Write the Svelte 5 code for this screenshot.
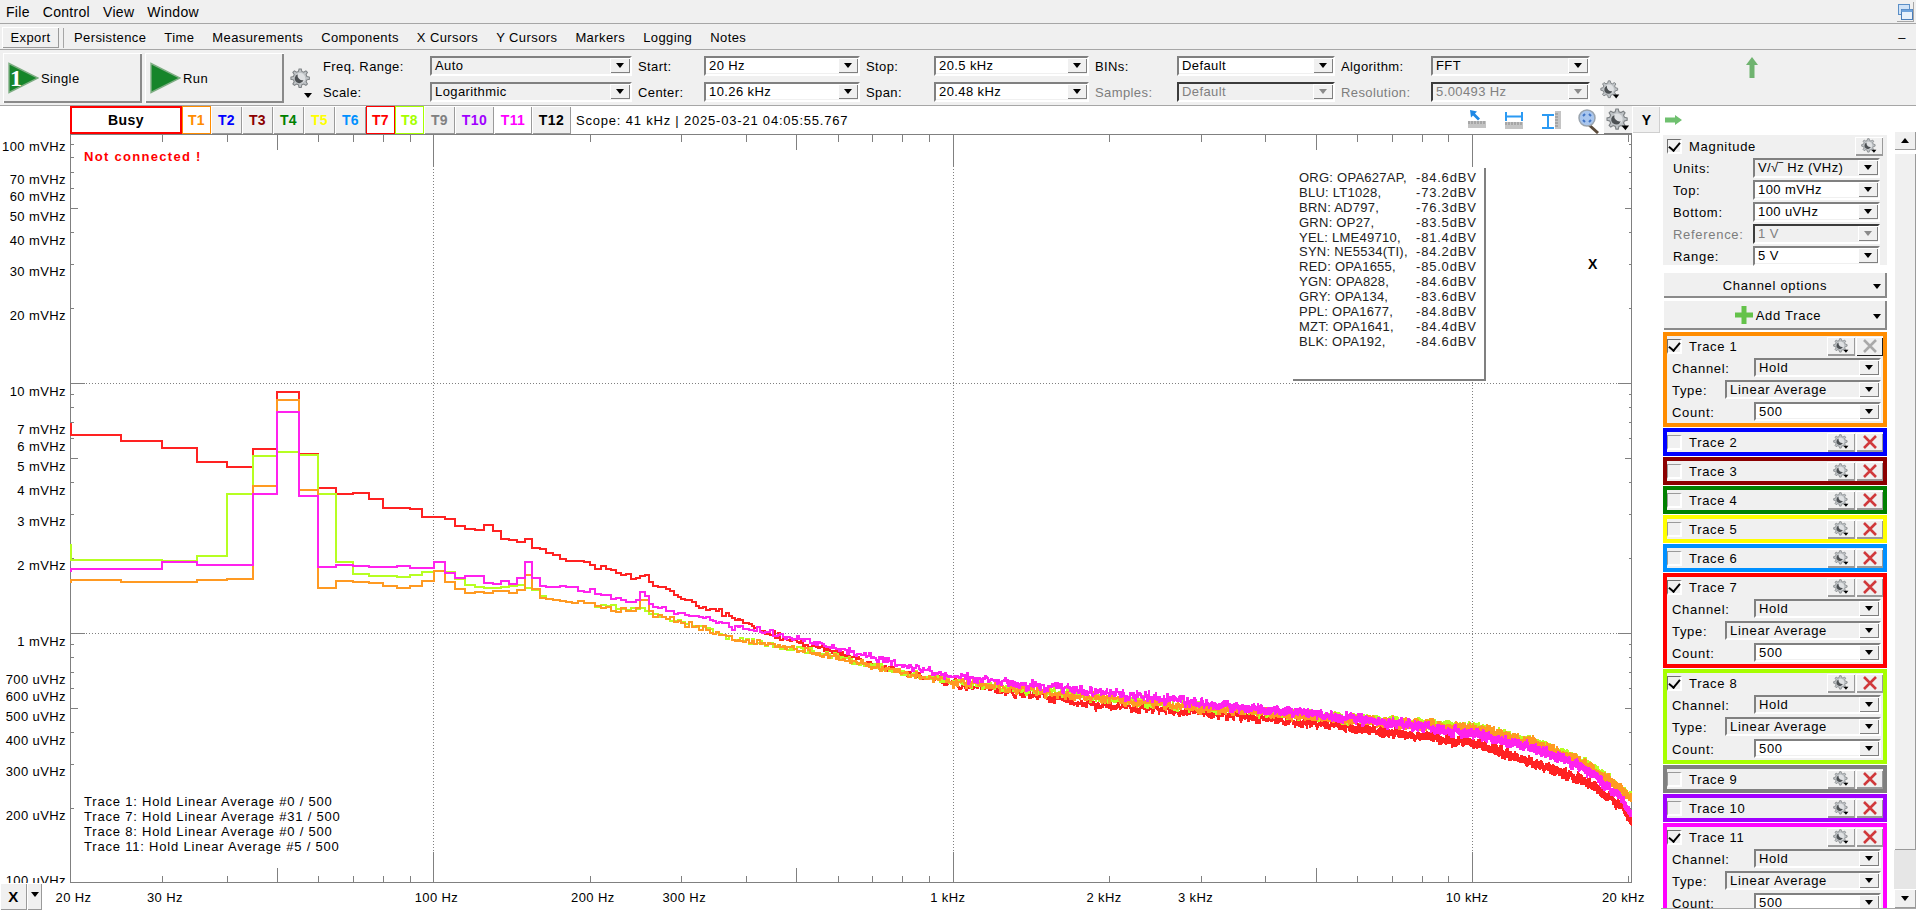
<script>
  const menus = ['File', 'Control', 'View', 'Window'];
  const tools = ['Persistence', 'Time', 'Measurements', 'Components', 'X Cursors', 'Y Cursors', 'Markers', 'Logging', 'Notes'];

  const tabs = [
    { label: 'T1', color: '#ff8c00', w: 29, on: true },
    { label: 'T2', color: '#0000ff', w: 31 },
    { label: 'T3', color: '#8b0000', w: 31 },
    { label: 'T4', color: '#008000', w: 31 },
    { label: 'T5', color: '#ffff00', w: 31 },
    { label: 'T6', color: '#0090ff', w: 31 },
    { label: 'T7', color: '#ff0000', w: 29, on: true },
    { label: 'T8', color: '#a6ff00', w: 29, on: true },
    { label: 'T9', color: '#808080', w: 31 },
    { label: 'T10', color: '#a000ff', w: 39 },
    { label: 'T11', color: '#ff00ff', w: 38, flat: true },
    { label: 'T12', color: '#000000', w: 39 }
  ];

  const traces = [
    { n: 1, color: '#ff8c00', open: true, off: true },
    { n: 2, color: '#0000ff' },
    { n: 3, color: '#8b0000' },
    { n: 4, color: '#008000' },
    { n: 5, color: '#ffff00' },
    { n: 6, color: '#0090ff' },
    { n: 7, color: '#ff0000', open: true },
    { n: 8, color: '#a6ff00', open: true },
    { n: 9, color: '#808080' },
    { n: 10, color: '#a000ff' },
    { n: 11, color: '#ff00ff', open: true }
  ];

  const legend = [
    ['ORG: OPA627AP,', '-84.6dBV'],
    ['BLU: LT1028,', '-73.2dBV'],
    ['BRN: AD797,', '-76.3dBV'],
    ['GRN: OP27,', '-83.5dBV'],
    ['YEL: LME49710,', '-81.4dBV'],
    ['SYN: NE5534(TI),', '-84.2dBV'],
    ['RED: OPA1655,', '-85.0dBV'],
    ['YGN: OPA828,', '-84.6dBV'],
    ['GRY: OPA134,', '-83.6dBV'],
    ['PPL: OPA1677,', '-84.8dBV'],
    ['MZT: OPA1641,', '-84.4dBV'],
    ['BLK: OPA192,', '-84.6dBV']
  ];

  const status = [
    'Trace 1: Hold Linear Average #0 / 500',
    'Trace 7: Hold Linear Average #31 / 500',
    'Trace 8: Hold Linear Average #0 / 500',
    'Trace 11: Hold Linear Average #5 / 500'
  ];

  // plot scales, y is relative to the top of the plot (screen y 134)
  const PLOT_TOP = 134;
  const AX_L = 70.5;
  const AX_R = 1631.5;
  const AX_B = 748.5;
  const fx = (f) => 70.5 + 519.3 * Math.log10(f / 20);
  const vy = (mv) => 133 - PLOT_TOP + 250 * Math.log10(100 / mv);
  const fmtV = (mv) => (mv >= 1 ? `${mv} mVHz` : `${Math.round(mv * 1000)} uVHz`);
  // the first and last label are pushed inside the plot
  const labelY = (mv) => (mv === 100 ? 17 : mv === 0.1 ? 751 : vy(mv) + 12.5);

  const levels = [];
  for (const d of [10, 1, 0.1]) {
    for (const m of [9, 8, 7, 6, 5, 4, 3, 2, 1]) levels.push({ mv: +(m * d).toPrecision(2), m });
  }
  const freqs = [];
  for (const d of [10, 100, 1000, 10000]) {
    for (let m = 1; m <= 9; m++) {
      const f = m * d;
      if (f > 20 && f <= 20000) freqs.push({ f, m });
    }
  }

  const yLabels = [100, 70, 60, 50, 40, 30, 20, 10, 7, 6, 5, 4, 3, 2, 1, 0.7, 0.6, 0.5, 0.4, 0.3, 0.2, 0.1];
  const xLabels = [
    ['20 Hz', 20], ['30 Hz', 30], ['100 Hz', 100], ['200 Hz', 200], ['300 Hz', 300],
    ['1 kHz', 1000], ['2 kHz', 2000], ['3 kHz', 3000], ['10 kHz', 10000], ['20 kHz', 20000]
  ];

  // measured bins 20..175 Hz, 5 Hz wide
  const lowRed = [195, 212, 233, 275, 290, 237, 65, 251, 353, 371, 369, 386, 413, 413, 416, 440, 440, 446, 468, 476, 480, 464, 482, 507, 510, 515, 507, 534, 537, 548, 556, 566];
  const lowOrange = [630, 635, 635, 630, 627, 348, 90, 360, 654, 632, 635, 638, 647, 654, 648, 632, 602, 635, 657, 668, 665, 668, 662, 662, 668, 660, 615, 657, 683, 688, 690, 692];
  const lowLime = [570, 570, 572, 557, 372, 258, 245, 255, 372, 575, 612, 618, 618, 620, 614, 606, 602, 607, 627, 645, 651, 655, 655, 652, 648, 645, 653, 660, 678, 686, 690, 693];
  const lowMag = [596, 596, 576, 585, 585, 372, 126, 378, 591, 585, 588, 591, 591, 588, 593, 593, 575, 608, 624, 618, 618, 638, 642, 632, 642, 623, 575, 623, 648, 651, 650, 648];

  const redCurve = [[180, 559], [250, 578], [326, 606], [379, 618], [443, 633], [596, 653], [789, 672], [1000, 683], [1917, 705], [3000, 713], [4800, 722], [10000, 743], [13000, 762], [16400, 780], [19300, 805], [20500, 826]];
  const magCurve = [[180, 586], [250, 605], [326, 617], [379, 627], [443, 633], [596, 648], [789, 665], [1000, 677], [1917, 692], [3000, 703], [4800, 713], [10000, 733], [13000, 747], [16400, 768], [19300, 797], [20500, 820]];
  const orangeCurve = [[180, 601], [250, 612], [326, 628], [379, 640], [443, 645], [596, 657], [789, 673], [1000, 682], [1917, 698], [3000, 708], [4800, 716], [10000, 728], [13000, 742], [16400, 763], [19300, 788], [20500, 800]];
  const limeCurve = orangeCurve.map(([f, y]) => [f, y - 0.5]);

  function rng(seed) {
    let a = seed;
    return () => {
      a = (a + 0x6d2b79f5) | 0;
      let t = Math.imul(a ^ (a >>> 15), 1 | a);
      t = (t + Math.imul(t ^ (t >>> 7), 61 | t)) ^ t;
      return ((t ^ (t >>> 14)) >>> 0) / 4294967296;
    };
  }

  function interp(curve, f) {
    for (let i = 1; i < curve.length; i++) {
      if (f <= curve[i][0]) {
        const [f0, y0] = curve[i - 1];
        const [f1, y1] = curve[i];
        const t = (Math.log(f) - Math.log(f0)) / (Math.log(f1) - Math.log(f0));
        return y0 + (y1 - y0) * t;
      }
    }
    return curve[curve.length - 1][1];
  }

  function tracePath(low, startZoom, curve, spike, seed) {
    const rand = rng(seed);
    let d = `M${AX_L} ${(370 + startZoom / 3 - PLOT_TOP).toFixed(1)}`;
    let col = -1;
    let jitter = 0;
    for (let i = 0; ; i++) {
      const f = 20 + i * 5;
      if (f > 20500) break;
      const x0 = fx(f);
      // per column offset, so the band keeps a rough edge where bins are dense
      const c = Math.floor(x0 / 2);
      if (c !== col) {
        col = c;
        jitter = (rand() - 0.5) * (f < 1000 ? 2 : 5);
      }
      let y;
      if (i < low.length) {
        y = 370 + low[i] / 3;
      } else {
        const amp = f < 400 ? 3 : f < 1000 ? 4 : 4.5;
        const r = (rand() + rand()) / 2 - 0.5;
        y = interp(curve, f) + r * amp * 2 + jitter;
        if (f === 250 || f === 255) y += spike;
        if (f === 245 || f === 260) y += spike / 3;
      }
      const x1 = Math.min(fx(f + 5), AX_R);
      d += `V${(y - PLOT_TOP).toFixed(1)}H${x1.toFixed(1)}`;
      if (x0 >= AX_R) break;
    }
    return d;
  }

  const curves = [
    { color: '#ff2222', d: tracePath(lowRed, 158, redCurve, -4, 7) },
    { color: '#b6ff22', d: tracePath(lowLime, 522, limeCurve, -4, 8) },
    { color: '#ff9a22', d: tracePath(lowOrange, 640, orangeCurve, -12, 1) },
    { color: '#ff22ee', d: tracePath(lowMag, 605, magCurve, -12, 11) }
  ];

  function gearPath() {
    const pts = [];
    const teeth = 8;
    for (let i = 0; i < teeth; i++) {
      const a = (i / teeth) * Math.PI * 2;
      const w = Math.PI / teeth;
      for (const [r, o] of [[8.2, -0.62], [11, -0.3], [11, 0.3], [8.2, 0.62]]) {
        pts.push(`${(12 + r * Math.cos(a + o * w)).toFixed(2)} ${(12 + r * Math.sin(a + o * w)).toFixed(2)}`);
      }
    }
    return 'M' + pts.join('L') + 'Z';
  }
  const gear = gearPath();
</script>

{#snippet cog(size, caret)}
  <svg class="cog" width={size} height={size} viewBox="0 0 26 26">
    <path d={gear} fill="#bfc3c6" stroke="#7d8184" stroke-width="1.2" />
    <circle cx="12" cy="12" r="6" fill="#dfe1e3" />
    <path d="M9 7.5a5.4 5.4 0 1 0 7 7a6 6 0 0 1-7-7z" fill="#4c5053" />
    {#if caret}<path d="M17 19h8l-4 5z" fill="#000" />{/if}
  </svg>
{/snippet}

{#snippet sel(text, kind = '')}
  <div class="sel {kind}">
    <span class="val">{text}</span>
    <span class="drop"><i></i></span>
  </div>
{/snippet}

{#snippet play(one)}
  <svg class="play" width="32" height="32" viewBox="0 0 32 32">
    <path d="M2 1.5L31 16L2 30.5z" fill="#16852a" stroke="#7fae84" stroke-width="1.4" />
    {#if one}<text x="3" y="24" class="one">1</text>{/if}
  </svg>
{/snippet}

<div class="app">
  <div class="menubar">
    {#each menus as m}<span>{m}</span>{/each}
    <span class="win-btn">
      <svg width="17" height="18" viewBox="0 0 17 18">
        <rect x="1.5" y="1.5" width="11" height="10" fill="#cfe2f7" stroke="#5b8fc7" />
        <rect x="4.5" y="6.5" width="11" height="10" fill="#e8f1fb" stroke="#4a7db8" />
        <rect x="4.5" y="6.5" width="11" height="2.5" fill="#6fa3dc" />
      </svg>
    </span>
  </div>

  <div class="toolbar">
    <button class="raised export">Export</button>
    <span class="sep"></span>
    {#each tools as t}<span class="tool">{t}</span>{/each}
    <span class="dash">–</span>
  </div>

  <div class="controls">
    <button class="raised big">{@render play(true)}<span>Single</span></button>
    <button class="raised big">{@render play(false)}<span>Run</span></button>
    <div class="cog-col">
      {@render cog(22, false)}
      <i class="caret"></i>
    </div>
    <div class="ctl-grid">
      <span>Freq. Range:</span>{@render sel('Auto')}
      <span class="pad">Start:</span>{@render sel('20 Hz', 'edit')}
      <span class="pad">Stop:</span>{@render sel('20.5 kHz', 'edit')}
      <span class="pad">BINs:</span>{@render sel('Default', 'edit')}
      <span class="pad">Algorithm:</span>{@render sel('FFT')}
      <span>Scale:</span>{@render sel('Logarithmic')}
      <span class="pad">Center:</span>{@render sel('10.26 kHz', 'edit')}
      <span class="pad">Span:</span>{@render sel('20.48 kHz', 'edit')}
      <span class="pad dim">Samples:</span>{@render sel('Default', 'dis')}
      <span class="pad dim">Resolution:</span>{@render sel('5.00493 Hz', 'dis')}
    </div>
    <div class="res-cog">{@render cog(20, true)}</div>
    <svg class="up" width="12" height="21" viewBox="0 0 12 21">
      <path d="M6 0L12 8H8.5V21H3.5V8H0z" fill="#6fb36f" />
    </svg>
  </div>

  <div class="main">
    <div class="left">
      <div class="tabs">
        <div class="busy">Busy</div>
        {#each tabs as t}
          <div
            class="tab"
            class:on={t.on}
            class:flat={t.flat}
            style="width:{t.w}px;color:{t.color};{t.on ? `border-color:${t.color}` : ''}"
          >{t.label}</div>
        {/each}
        <div class="scope">Scope: 41 kHz | 2025-03-21 04:05:55.767</div>
        <svg class="marks" width="136" height="28" viewBox="0 0 136 28">
          <rect x="0" y="15" width="18" height="7" fill="#c4c4c4" />
          <path d="M1 15v3M4 15v3M7 15v3M10 15v3M13 15v3M16 15v3" stroke="#888" />
          <path d="M2 4l7 1.5-2 2 5 5-2 2-5-5-2 2z" fill="#1e88e5" />
          <rect x="37" y="16" width="18" height="7" fill="#c4c4c4" />
          <path d="M38 16v3M41 16v3M44 16v3M47 16v3M50 16v3M53 16v3" stroke="#888" />
          <path d="M38 6v9M54 6v9M38 10.500h16" fill="none" stroke="#2b9af3" stroke-width="2" />
          <rect x="87" y="5" width="6" height="18" fill="#c4c4c4" />
          <path d="M87 8h3M87 11h3M87 14h3M87 17h3M87 20h3" stroke="#888" />
          <path d="M74 9h12M74 22h12M80 9v13" fill="none" stroke="#2b9af3" stroke-width="2" />
          <path d="M120 18l10 9" stroke="#5a4a3a" stroke-width="3" />
          <circle cx="119" cy="12" r="8" fill="#a9c6ee" stroke="#9aa4ae" stroke-width="1.5" />
          <path d="M115 10l2-2M123 10l-2-2M115 14l2 2M123 14l-2 2" stroke="#3f73c4" stroke-width="2" />
        </svg>
        <div class="cogbtn">{@render cog(24, true)}</div>
      </div>

      <div class="plot">
        <svg class="graph" width="1632" height="749" viewBox="0 0 1632 749">
          <!-- grid and ticks -->
          <g class="ticks">
            {#each levels as { mv, m }}
              {@const y = Math.round(vy(mv)) + 0.5}
              {@const len = m === 1 ? 14 : m === 5 ? 7 : 3}
              <path d="M{AX_L} {y}h{len}M{AX_R} {y}h-{len}" />
            {/each}
            {#each freqs as { f, m }}
              {@const x = Math.round(fx(f)) + 0.5}
              {@const len = m === 1 ? 31 : m === 5 ? 15 : 7}
              <path d="M{x} 0.5v{len}M{x} {AX_B}v-{len}" />
            {/each}
            <path d="M{AX_L} 0.5H{AX_R}V{AX_B}H{AX_L}Z" />
          </g>
          <g class="dots">
            {#each [10, 1] as mv}
              {@const y = Math.round(vy(mv)) + 0.5}
              <path d="M{AX_L + 15} {y}H{AX_R - 15}" />
            {/each}
            {#each [100, 1000, 10000] as f}
              {@const x = Math.round(fx(f)) + 0.5}
              <path d="M{x} 32V{AX_B - 32}" />
            {/each}
          </g>
          {#each yLabels as mv}
            <text class="ylab" x="66" y={labelY(mv)}>{fmtV(mv)}</text>
          {/each}
          {#each curves as c}
            <path class="curve" d={c.d} stroke={c.color} />
          {/each}
        </svg>

        <div class="not-conn">Not connected !</div>
        <div class="legend">
          {#each legend as row}
            <span>{row[0]}</span><span class="db">{row[1]}</span>
          {/each}
        </div>
        <div class="x-mark">X</div>
        <div class="status">
          {#each status as s}<div>{s}</div>{/each}
        </div>
      </div>

      <div class="axis-row">
        <button class="raised x-btn">X</button>
        <button class="raised x-drop"><i class="caret"></i></button>
        <svg class="xlabs" width="1590" height="28" viewBox="42 0 1590 28">
          {#each xLabels as [t, f]}
            <text x={fx(f) + (f < 1000 ? 3 : -5)} y="19">{t}</text>
          {/each}
        </svg>
      </div>
    </div>

    <div class="right">
      <div class="y-col"><button class="raised y-btn">Y</button></div>
      <div class="side">
        <div class="side-head">
          <svg width="17" height="10" viewBox="0 0 17 10">
            <path d="M0 2.500H10V0L17 5L10 10V7.500H0z" fill="#6fc06f" />
          </svg>
        </div>
        <div class="side-body">
          <div class="list">
            <div class="mag">
              <div class="head">
                <span class="check on"></span>
                <span class="name">Magnitude</span>
                <button class="raised ico wide">{@render cog(16, true)}</button>
              </div>
              <div class="row"><span>Units:</span>{@render sel('V/√‾ Hz (VHz)', 'w127')}</div>
              <div class="row"><span>Top:</span>{@render sel('100 mVHz', 'w127 edit')}</div>
              <div class="row"><span>Bottom:</span>{@render sel('100 uVHz', 'w127 edit')}</div>
              <div class="row dim"><span>Reference:</span>{@render sel('1 V', 'w127 dis')}</div>
              <div class="row"><span>Range:</span>{@render sel('5 V', 'w127 edit')}</div>
            </div>

            <button class="raised wide-btn opts"><span>Channel options</span><i class="caret"></i></button>
            <button class="raised wide-btn add">
              <span>
                <svg width="18" height="18" viewBox="0 0 18 18">
                  <path d="M6.500 0h5v6.500H18v5h-6.500V18h-5v-6.500H0v-5h6.500z" fill="#64c24a" />
                </svg>
                Add Trace
              </span>
              <i class="caret"></i>
            </button>

            {#each traces as t}
              <div class="trace" class:open={t.open} style="border-color:{t.color}">
                <div class="head">
                  <span class="check" class:on={t.open}></span>
                  <span class="name">Trace {t.n}</span>
                  <button class="raised ico">{@render cog(16, true)}</button>
                  <button class="raised ico" class:off={t.off}>
                    <svg width="16" height="16" viewBox="0 0 16 16">
                      <path d="M2 2L14 14M14 2L2 14" stroke={t.off ? '#a9a9a9' : '#d0393b'} stroke-width="2.600" />
                    </svg>
                  </button>
                </div>
                {#if t.open}
                  <div class="row tight"><span>Channel:</span>{@render sel('Hold', 'w127')}</div>
                  <div class="row tight"><span>Type:</span>{@render sel('Linear Average', 'w156')}</div>
                  <div class="row tight"><span>Count:</span>{@render sel('500', 'w127 edit')}</div>
                {/if}
              </div>
            {/each}
          </div>

          <div class="scrollbar">
            <button class="raised sb-btn"><i class="caret up-c"></i></button>
            <div class="thumb"></div>
            <div class="track"></div>
            <button class="raised sb-btn"><i class="caret"></i></button>
          </div>
        </div>
      </div>
    </div>
  </div>
</div>

<style>
  :global(body) {
    margin: 0;
    background: #fff;
  }

  .app {
    width: 1916px;
    height: 911px;
    overflow: hidden;
    display: flex;
    flex-direction: column;
    background: #f0f0f0;
    color: #000;
    font-family: 'Liberation Sans', Arial, sans-serif;
    font-size: 13px;
    letter-spacing: 0.4px;
  }

  button {
    font: inherit;
    letter-spacing: inherit;
    color: inherit;
    padding: 0;
    margin: 0;
    border: 0;
  }

  .raised {
    background: #f0f0f0;
    box-shadow: inset 1px 1px 0 #fff, inset -1px -1px 0 #9a9a9a;
  }

  .caret {
    display: block;
    width: 0;
    height: 0;
    border-left: 4px solid transparent;
    border-right: 4px solid transparent;
    border-top: 5px solid #000;
  }

  .caret.up-c {
    border-top: 0;
    border-bottom: 5px solid #000;
  }

  .menubar {
    height: 24px;
    box-sizing: border-box;
    border-bottom: 1px solid #a6a6a6;
    display: flex;
    align-items: center;
    gap: 13px;
    padding: 1px 0 0 6px;
    font-size: 14px;
    letter-spacing: 0.3px;
  }

  .win-btn {
    margin-left: auto;
    margin-right: 2px;
    height: 20px;
    display: flex;
    align-items: center;
    box-shadow: inset -1px -1px 0 #a6a6a6;
  }

  .toolbar {
    height: 26px;
    box-sizing: border-box;
    border-bottom: 1px solid #a6a6a6;
    display: flex;
    align-items: center;
    gap: 18px;
    padding: 2px 0 0 2px;
  }

  .export {
    width: 57px;
    height: 21px;
    margin-right: -14px;
  }

  .sep {
    width: 1px;
    height: 20px;
    background: #a6a6a6;
    margin-right: -8px;
  }

  .dash {
    margin-left: auto;
    margin-right: 10px;
  }

  .controls {
    height: 56px;
    box-sizing: border-box;
    border-bottom: 1px solid #a6a6a6;
    display: flex;
    align-items: flex-start;
    padding: 3px 0 0 3px;
  }

  .big {
    width: 139px;
    height: 50px;
    margin-right: 3px;
    display: flex;
    align-items: center;
    gap: 2px;
    padding-left: 4px;
    box-sizing: border-box;
    box-shadow: inset 1px 1px 0 #fff, inset -2px -2px 0 #8a8a8a;
  }

  .big + .big {
    margin-right: 0;
  }

  .play {
    flex: none;
  }

  .play text.one {
    font-family: 'Liberation Serif', serif;
    font-weight: 700;
    font-size: 24px;
    fill: #fff;
    letter-spacing: 0;
  }

  .cog-col {
    width: 39px;
    height: 50px;
    position: relative;
    flex: none;
  }

  .cog-col .cog {
    position: absolute;
    left: 6px;
    top: 15px;
  }

  .cog-col .caret {
    position: absolute;
    left: 20px;
    top: 40px;
  }

  .ctl-grid {
    display: grid;
    grid-template-columns: 107px 202px 72px 156px 74px 155px 88px 158px 96px 159px;
    grid-auto-rows: 20px;
    row-gap: 6px;
    margin-top: 3px;
    flex: none;
    align-items: center;
  }

  .ctl-grid > span {
    padding-top: 1px;
  }

  .ctl-grid .pad {
    padding-left: 6px;
  }

  .ctl-grid .val {
    line-height: 18px;
  }

  .dim {
    color: #7d7d7d;
  }

  .sel {
    height: 20px;
    box-sizing: border-box;
    border-top: 2px solid #808080;
    border-left: 2px solid #808080;
    border-right: 2px solid #fff;
    border-bottom: 2px solid #fff;
    display: flex;
    align-items: stretch;
    justify-content: space-between;
    background: #f0f0f0;
    color: #000;
    white-space: nowrap;
    overflow: hidden;
  }

  .sel .val {
    flex: 1;
    padding-left: 3px;
    line-height: 15px;
    margin-bottom: 1px;
  }

  .sel.edit .val {
    background: #fff;
  }

  .sel.dis {
    border-top-color: #3c3c3c;
    border-left-color: #3c3c3c;
    color: #808080;
  }

  .drop {
    width: 20px;
    height: 15px;
    flex: none;
    background: #f0f0f0;
    box-shadow: inset 1px 1px 0 #fff, inset -1px -1px 0 #808080;
    display: flex;
    align-items: center;
    justify-content: center;
  }

  .drop i {
    width: 0;
    height: 0;
    border-left: 4px solid transparent;
    border-right: 4px solid transparent;
    border-top: 5px solid #000;
  }

  .sel.dis .drop i {
    border-top-color: #8a8a8a;
  }

  .res-cog {
    margin: 27px 0 0 10px;
    flex: none;
  }

  .up {
    margin: 4px 0 0 126px;
    flex: none;
  }

  .main {
    flex: 1;
    min-height: 0;
    display: flex;
    background: #fff;
  }

  .left {
    width: 1632px;
    flex: none;
    display: flex;
    flex-direction: column;
  }

  .tabs {
    height: 28px;
    flex: none;
    display: flex;
    padding-left: 70px;
    box-sizing: border-box;
  }

  .busy {
    width: 112px;
    box-sizing: border-box;
    border: 2px solid #ff0000;
    display: flex;
    align-items: center;
    justify-content: center;
    font-weight: 700;
    font-size: 14px;
  }

  .tab {
    box-sizing: border-box;
    display: flex;
    align-items: center;
    justify-content: center;
    font-weight: 700;
    font-size: 14px;
    background: #f0f0f0;
    box-shadow: inset 1px 1px 0 #fff, inset -1px -1px 0 #9a9a9a;
  }

  .tab.on {
    background: #fff;
    box-shadow: none;
    border: 1px solid;
  }

  .tab.flat {
    background: #fff;
  }

  .scope {
    margin-left: 5px;
    align-self: center;
    white-space: nowrap;
    letter-spacing: 0.8px;
  }

  .marks {
    margin-left: auto;
    flex: none;
  }

  .cogbtn {
    width: 28px;
    flex: none;
    display: flex;
    align-items: center;
    justify-content: center;
    background: #f0f0f0;
    box-shadow: inset 0 -1px 0 #808080;
  }

  .plot {
    height: 749px;
    flex: none;
    position: relative;
    overflow: hidden;
  }

  .graph {
    display: block;
  }

  .ticks path {
    fill: none;
    stroke: #808080;
    stroke-width: 1;
    shape-rendering: crispEdges;
  }

  .dots path {
    fill: none;
    stroke: #808080;
    stroke-width: 1;
    stroke-dasharray: 1 2;
    shape-rendering: crispEdges;
  }

  .ylab {
    text-anchor: end;
    font-size: 13px;
    fill: #000;
  }

  .curve {
    fill: none;
    stroke-width: 2;
    shape-rendering: crispEdges;
  }

  .not-conn {
    position: absolute;
    left: 84px;
    top: 15px;
    color: #ff0000;
    font-weight: 700;
    letter-spacing: 1.3px;
  }

  .legend {
    position: absolute;
    left: 1293px;
    top: 34px;
    width: 193px;
    height: 213px;
    box-sizing: border-box;
    background: #fff;
    border-right: 2px solid #808080;
    border-bottom: 2px solid #808080;
    padding: 2px 0 0 6px;
    display: grid;
    grid-template-columns: 117px auto;
    grid-auto-rows: 14.9px;
    line-height: 15px;
    letter-spacing: 0.25px;
    color: #222;
    white-space: nowrap;
  }

  .legend .db {
    letter-spacing: 0.8px;
  }

  .x-mark {
    position: absolute;
    left: 1588px;
    top: 122px;
    font-weight: 700;
    font-size: 14px;
  }

  .status {
    position: absolute;
    left: 84px;
    top: 660px;
    line-height: 15px;
    letter-spacing: 0.8px;
    white-space: nowrap;
  }

  .axis-row {
    height: 28px;
    flex: none;
    display: flex;
    align-items: flex-start;
  }

  .x-btn {
    width: 27px;
    height: 27px;
    font-weight: 700;
    font-size: 15px;
    flex: none;
  }

  .x-drop {
    width: 15px;
    height: 27px;
    flex: none;
    display: flex;
    justify-content: center;
    padding-top: 9px;
    box-sizing: border-box;
  }

  .xlabs {
    flex: none;
    display: block;
    overflow: visible;
  }

  .xlabs text {
    text-anchor: middle;
    font-size: 13px;
  }

  .right {
    flex: 1;
    min-width: 0;
    display: flex;
  }

  .y-col {
    width: 29px;
    flex: none;
    padding: 1px 0 0 1px;
    box-sizing: border-box;
  }

  .y-btn {
    width: 27px;
    height: 26px;
    font-weight: 700;
    font-size: 14px;
    box-shadow: inset -1px -1px 0 #cfcfcf;
  }

  .side {
    flex: 1;
    min-width: 0;
    display: flex;
    flex-direction: column;
  }

  .side-head {
    height: 25px;
    flex: none;
    padding: 7px 0 0 4px;
    box-sizing: border-box;
  }

  .side-body {
    height: 778px;
    flex: none;
    box-sizing: border-box;
    display: flex;
    border-bottom: 1px solid #a6a6a6;
    overflow: hidden;
  }

  .list {
    width: 224px;
    flex: none;
    margin-left: 2px;
    padding-top: 4px;
    display: flex;
    flex-direction: column;
  }

  .mag {
    height: 130px;
    flex: none;
    box-sizing: border-box;
    background: #f0f0f0;
    padding: 1px 4px 0;
    margin-bottom: 7px;
  }

  .head {
    height: 20px;
    display: flex;
    align-items: center;
  }

  .check {
    width: 15px;
    height: 15px;
    box-sizing: border-box;
    border: 2px solid #fff;
    border-top: 1px solid #9a9a9a;
    border-left: 1px solid #9a9a9a;
    flex: none;
    position: relative;
    background: #f0f0f0;
  }

  .check.on {
    border-top-color: #707070;
    border-left-color: #707070;
  }

  .check.on::after {
    content: '';
    position: absolute;
    left: 3px;
    top: 0;
    width: 5px;
    height: 9px;
    border-right: 2px solid #000;
    border-bottom: 2px solid #000;
    transform: rotate(40deg);
  }

  .head .name {
    margin-left: 7px;
    padding-top: 1px;
    flex: 1;
    letter-spacing: 0.7px;
  }

  .ico {
    width: 28px;
    height: 19px;
    flex: none;
    display: flex;
    align-items: center;
    justify-content: center;
    box-shadow: inset 1px 1px 0 #fff, inset -1px -2px 0 #9a9a9a;
  }

  .ico + .ico {
    width: 27px;
    margin-left: 1px;
  }

  .ico.off {
    box-shadow: inset 1px 1px 0 #fff, inset -1px -1px 0 #222;
  }

  .row {
    height: 20px;
    margin-top: 2px;
    display: flex;
    align-items: center;
    justify-content: space-between;
    padding: 0 3px 0 6px;
    letter-spacing: 0.7px;
  }

  .row .sel {
    letter-spacing: 0.4px;
  }

  .row.tight {
    height: 19px;
    margin-top: 3px;
    padding: 0 2px 0 5px;
  }

  .row.tight > span {
    padding-top: 1px;
  }

  .row.tight:nth-child(2) {
    margin-top: 2px;
  }

  .row.tight .sel {
    height: 19px;
    letter-spacing: 0.7px;
  }

  .w127 {
    width: 127px;
  }

  .w156 {
    width: 156px;
  }

  .wide-btn {
    position: relative;
    width: 224px;
    flex: none;
    display: flex;
    align-items: center;
    justify-content: center;
    letter-spacing: 0.7px;
    box-shadow: inset 1px 1px 0 #fff, inset -2px -2px 0 #8a8a8a;
  }

  .wide-btn .caret {
    position: absolute;
    right: 6px;
    top: 45%;
  }

  .opts {
    height: 26px;
    margin-bottom: 2px;
  }

  .add {
    height: 30px;
    margin-bottom: 2px;
  }

  .add span {
    display: flex;
    align-items: center;
    gap: 3px;
    margin-left: 6px;
  }

  .trace {
    height: 28px;
    flex: none;
    box-sizing: border-box;
    border: 4px solid;
    background: #f0f0f0;
    margin-bottom: 1px;
  }

  .trace.open {
    height: 95px;
  }

  .scrollbar {
    width: 22px;
    margin-left: 7px;
    flex: none;
    display: flex;
    flex-direction: column;
  }

  .sb-btn {
    height: 19px;
    flex: none;
    display: flex;
    align-items: center;
    justify-content: center;
  }

  .thumb {
    height: 697px;
    margin-top: 3px;
    flex: none;
    background: #f0f0f0;
    box-shadow: inset 1px 1px 0 #fff, inset 1px -1px 0 #9a9a9a, inset -1px 0 0 #9a9a9a;
  }

  .track {
    flex: 1;
    background: #e6e6e6;
  }
</style>
